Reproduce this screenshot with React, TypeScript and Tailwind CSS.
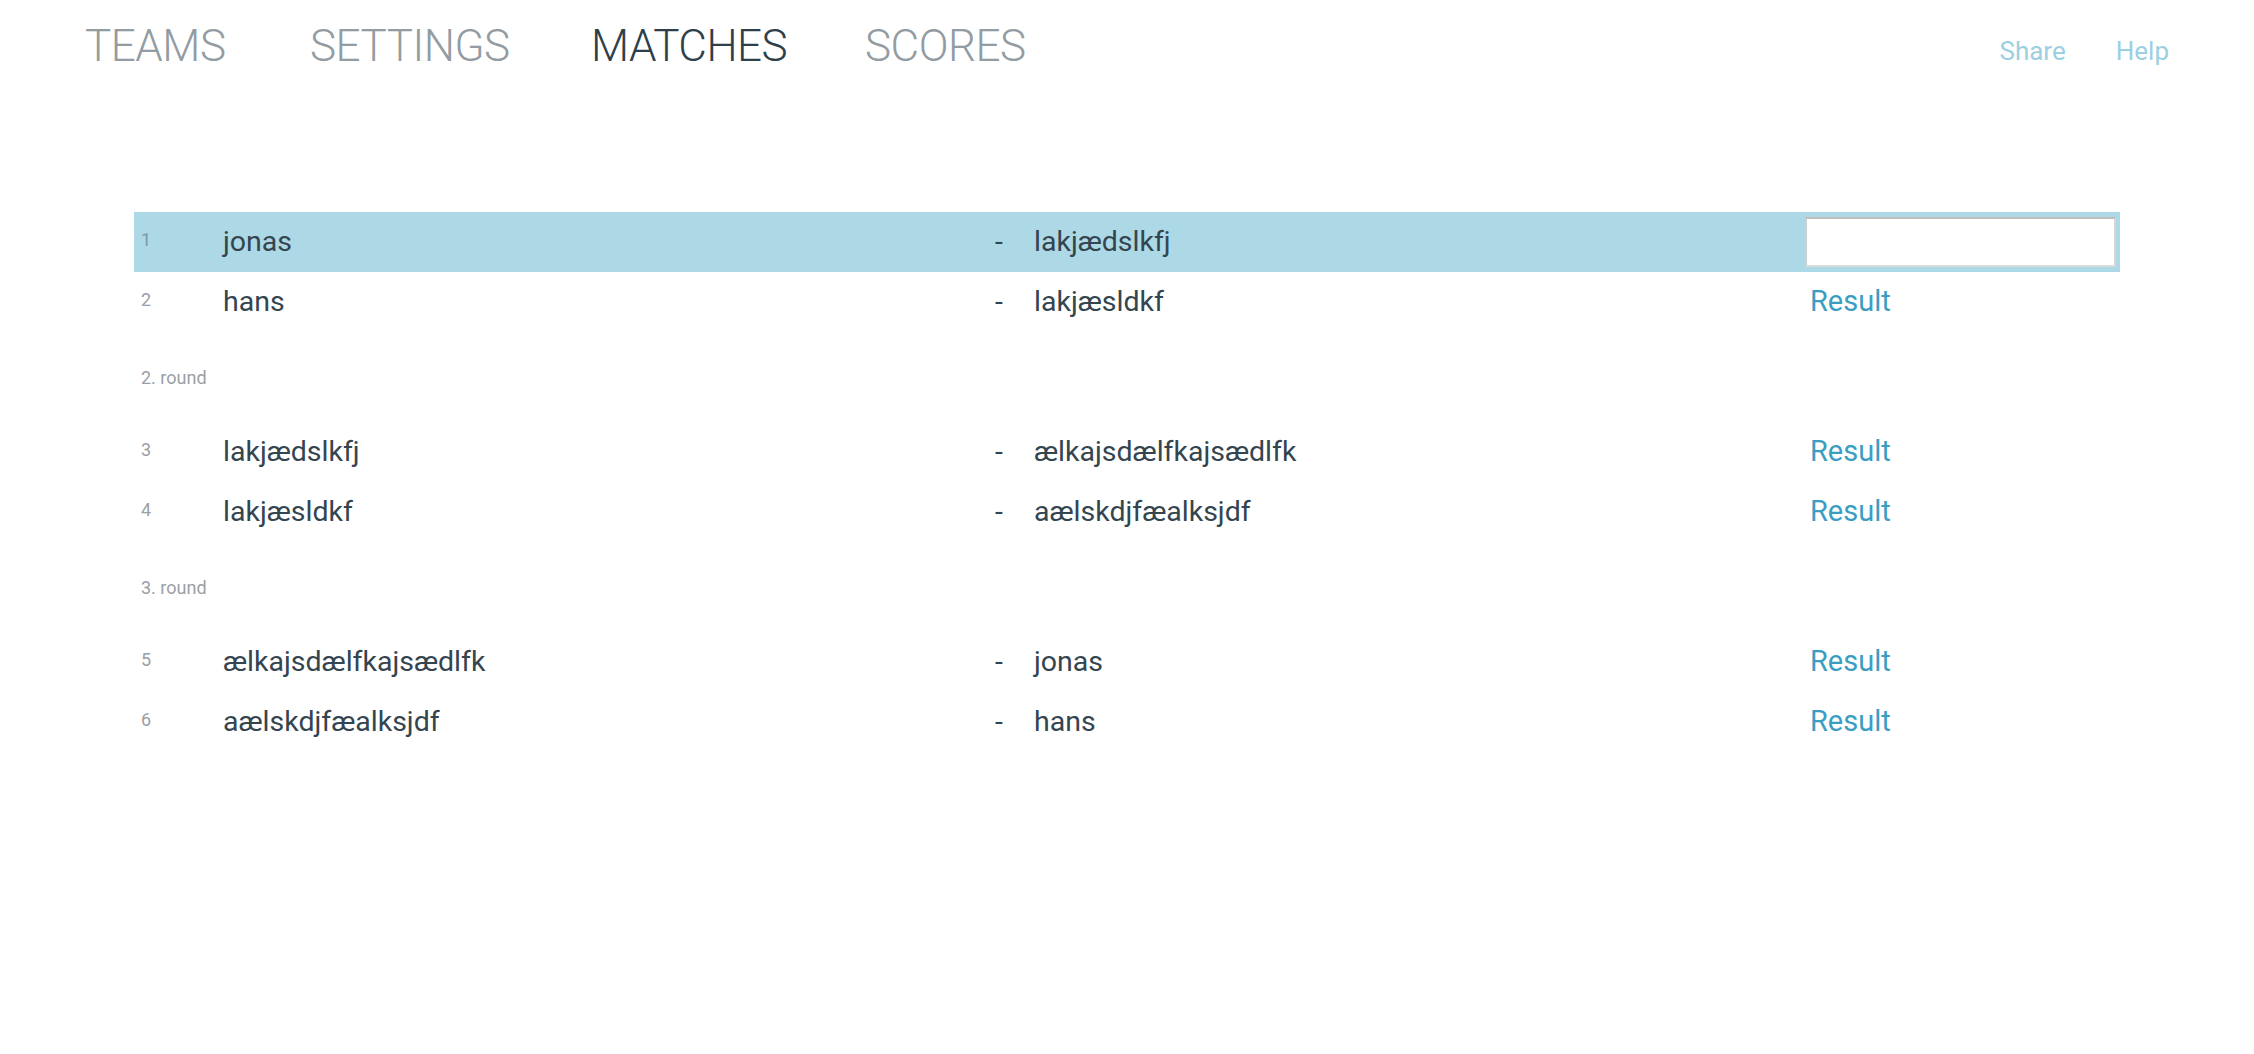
import React from "react";

type Match = { n: number; a: string; b: string; active?: boolean };

const rounds: { label?: string; matches: Match[] }[] = [
  {
    matches: [
      { n: 1, a: "jonas", b: "lakjædslkfj", active: true },
      { n: 2, a: "hans", b: "lakjæsldkf" },
    ],
  },
  {
    label: "2. round",
    matches: [
      { n: 3, a: "lakjædslkfj", b: "ælkajsdælfkajsædlfk" },
      { n: 4, a: "lakjæsldkf", b: "aælskdjfæalksjdf" },
    ],
  },
  {
    label: "3. round",
    matches: [
      { n: 5, a: "ælkajsdælfkajsædlfk", b: "jonas" },
      { n: 6, a: "aælskdjfæalksjdf", b: "hans" },
    ],
  },
];

function Row({ m }: { m: Match }) {
  return (
    <div
      className={
        "flex h-[60px] items-center " + (m.active ? "bg-[#add8e6]" : "bg-white")
      }
    >
      <div
        className={
          "w-[89px] shrink-0 pl-[7px] pb-[6px] text-[18px] " +
          (m.active ? "text-[#7c9aa5]" : "text-[#9aa0a4]")
        }
      >
        {m.n}
      </div>
      <div className="w-[772px] shrink-0 text-[28.5px] text-[#34454f]">{m.a}</div>
      <div className="w-[39px] shrink-0 text-[28.5px] text-[#34454f]">-</div>
      <div className="w-[771px] shrink-0 text-[28.5px] text-[#34454f]">{m.b}</div>
      <div className="flex-1 pr-[4px]">
        {m.active ? (
          <input
            className="block h-[50px] w-full border-2 border-t-[#bdbdbd] border-l-[#cfcfcf] border-r-[#d6d6d6] border-b-[#dadada] bg-white outline-none"
            defaultValue=""
          />
        ) : (
          <span className="pl-[5px] text-[29px] text-[#3a9ec2]">Result</span>
        )}
      </div>
    </div>
  );
}

export default function App() {
  return (
    <div
      className="min-h-screen bg-white"
      style={{ fontFamily: "Roboto, 'Open Sans', sans-serif" }}
    >
      <header className="flex items-start justify-between pl-[85px] pr-[85px] pt-[20px]">
        <nav className="flex items-center text-[44px] font-light uppercase tracking-[-0.5px] leading-[52px]">
          <span className="w-[225px] shrink-0 text-[#929ca2]">Teams</span>
          <span className="w-[281px] shrink-0 text-[#929ca2]">Settings</span>
          <span className="w-[274px] shrink-0 text-[#2e3f4a]">Matches</span>
          <span className="shrink-0 text-[#929ca2]">Scores</span>
        </nav>
        <div className="mt-[12px] flex gap-[50px] text-[26px] text-[#9ccfe1]">
          <span>Share</span>
          <span>Help</span>
        </div>
      </header>

      <main className="ml-[134px] mr-[134px] mt-[140px] w-[1986px]">
        {rounds.map((r, i) => (
          <div key={i}>
            {r.label && (
              <div className="flex h-[90px] items-center pl-[7px] text-[18px] text-[#9aa0a4]">
                {r.label}
              </div>
            )}
            {r.matches.map((m) => (
              <Row key={m.n} m={m} />
            ))}
          </div>
        ))}
      </main>
    </div>
  );
}
